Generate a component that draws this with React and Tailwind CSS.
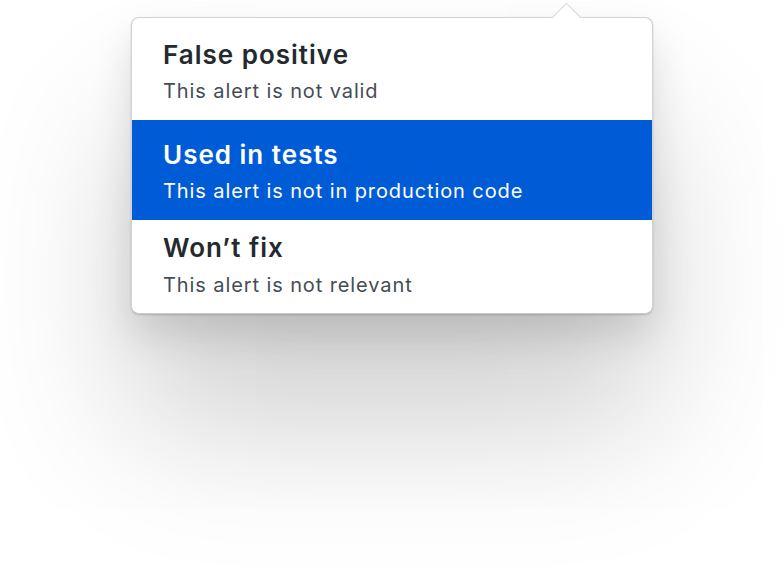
export default function App() {
  const font = { fontFamily: 'Inter, "Noto Sans", sans-serif' };
  return (
    <div className="w-[784px] h-[585px] bg-white overflow-hidden pt-[17px] pl-[131px]" style={font}>
      <div className="relative w-[522px] bg-white border border-[#d1d5da] border-b-[#c6ccd2] rounded-[8px] shadow-[0_1px_2px_rgba(27,31,35,0.2),0_20px_40px_rgba(0,0,0,0.12),0_110px_150px_rgba(0,0,0,0.19)]">
        <div className="absolute left-[424px] top-[-11.5px] w-[21px] h-[21px] rotate-45 bg-white border-l border-t border-[#d1d5da]" />
        <div className="relative flex flex-col pt-[21px] pb-[15px] px-[31px]">
          <div className="text-[26px] leading-[32px] font-semibold tracking-[1px] text-[#24292e]">False positive</div>
          <div className="mt-[6px] text-[20px] leading-[28px] tracking-[0.9px] text-[#444d56]">This alert is not valid</div>
        </div>
        <div className="relative flex flex-col pt-[19px] pb-[15px] px-[31px] bg-[#005cd6]">
          <div className="text-[26px] leading-[32px] font-semibold tracking-[1px] text-white">Used in tests</div>
          <div className="mt-[6px] text-[20px] leading-[28px] tracking-[0.9px] text-white">This alert is not in production code</div>
        </div>
        <div className="relative flex flex-col pt-[12px] pb-[14px] px-[31px]">
          <div className="text-[26px] leading-[32px] font-semibold tracking-[1px] text-[#24292e]">Won’t fix</div>
          <div className="mt-[7px] text-[20px] leading-[28px] tracking-[0.9px] text-[#444d56]">This alert is not relevant</div>
        </div>
      </div>
    </div>
  );
}
